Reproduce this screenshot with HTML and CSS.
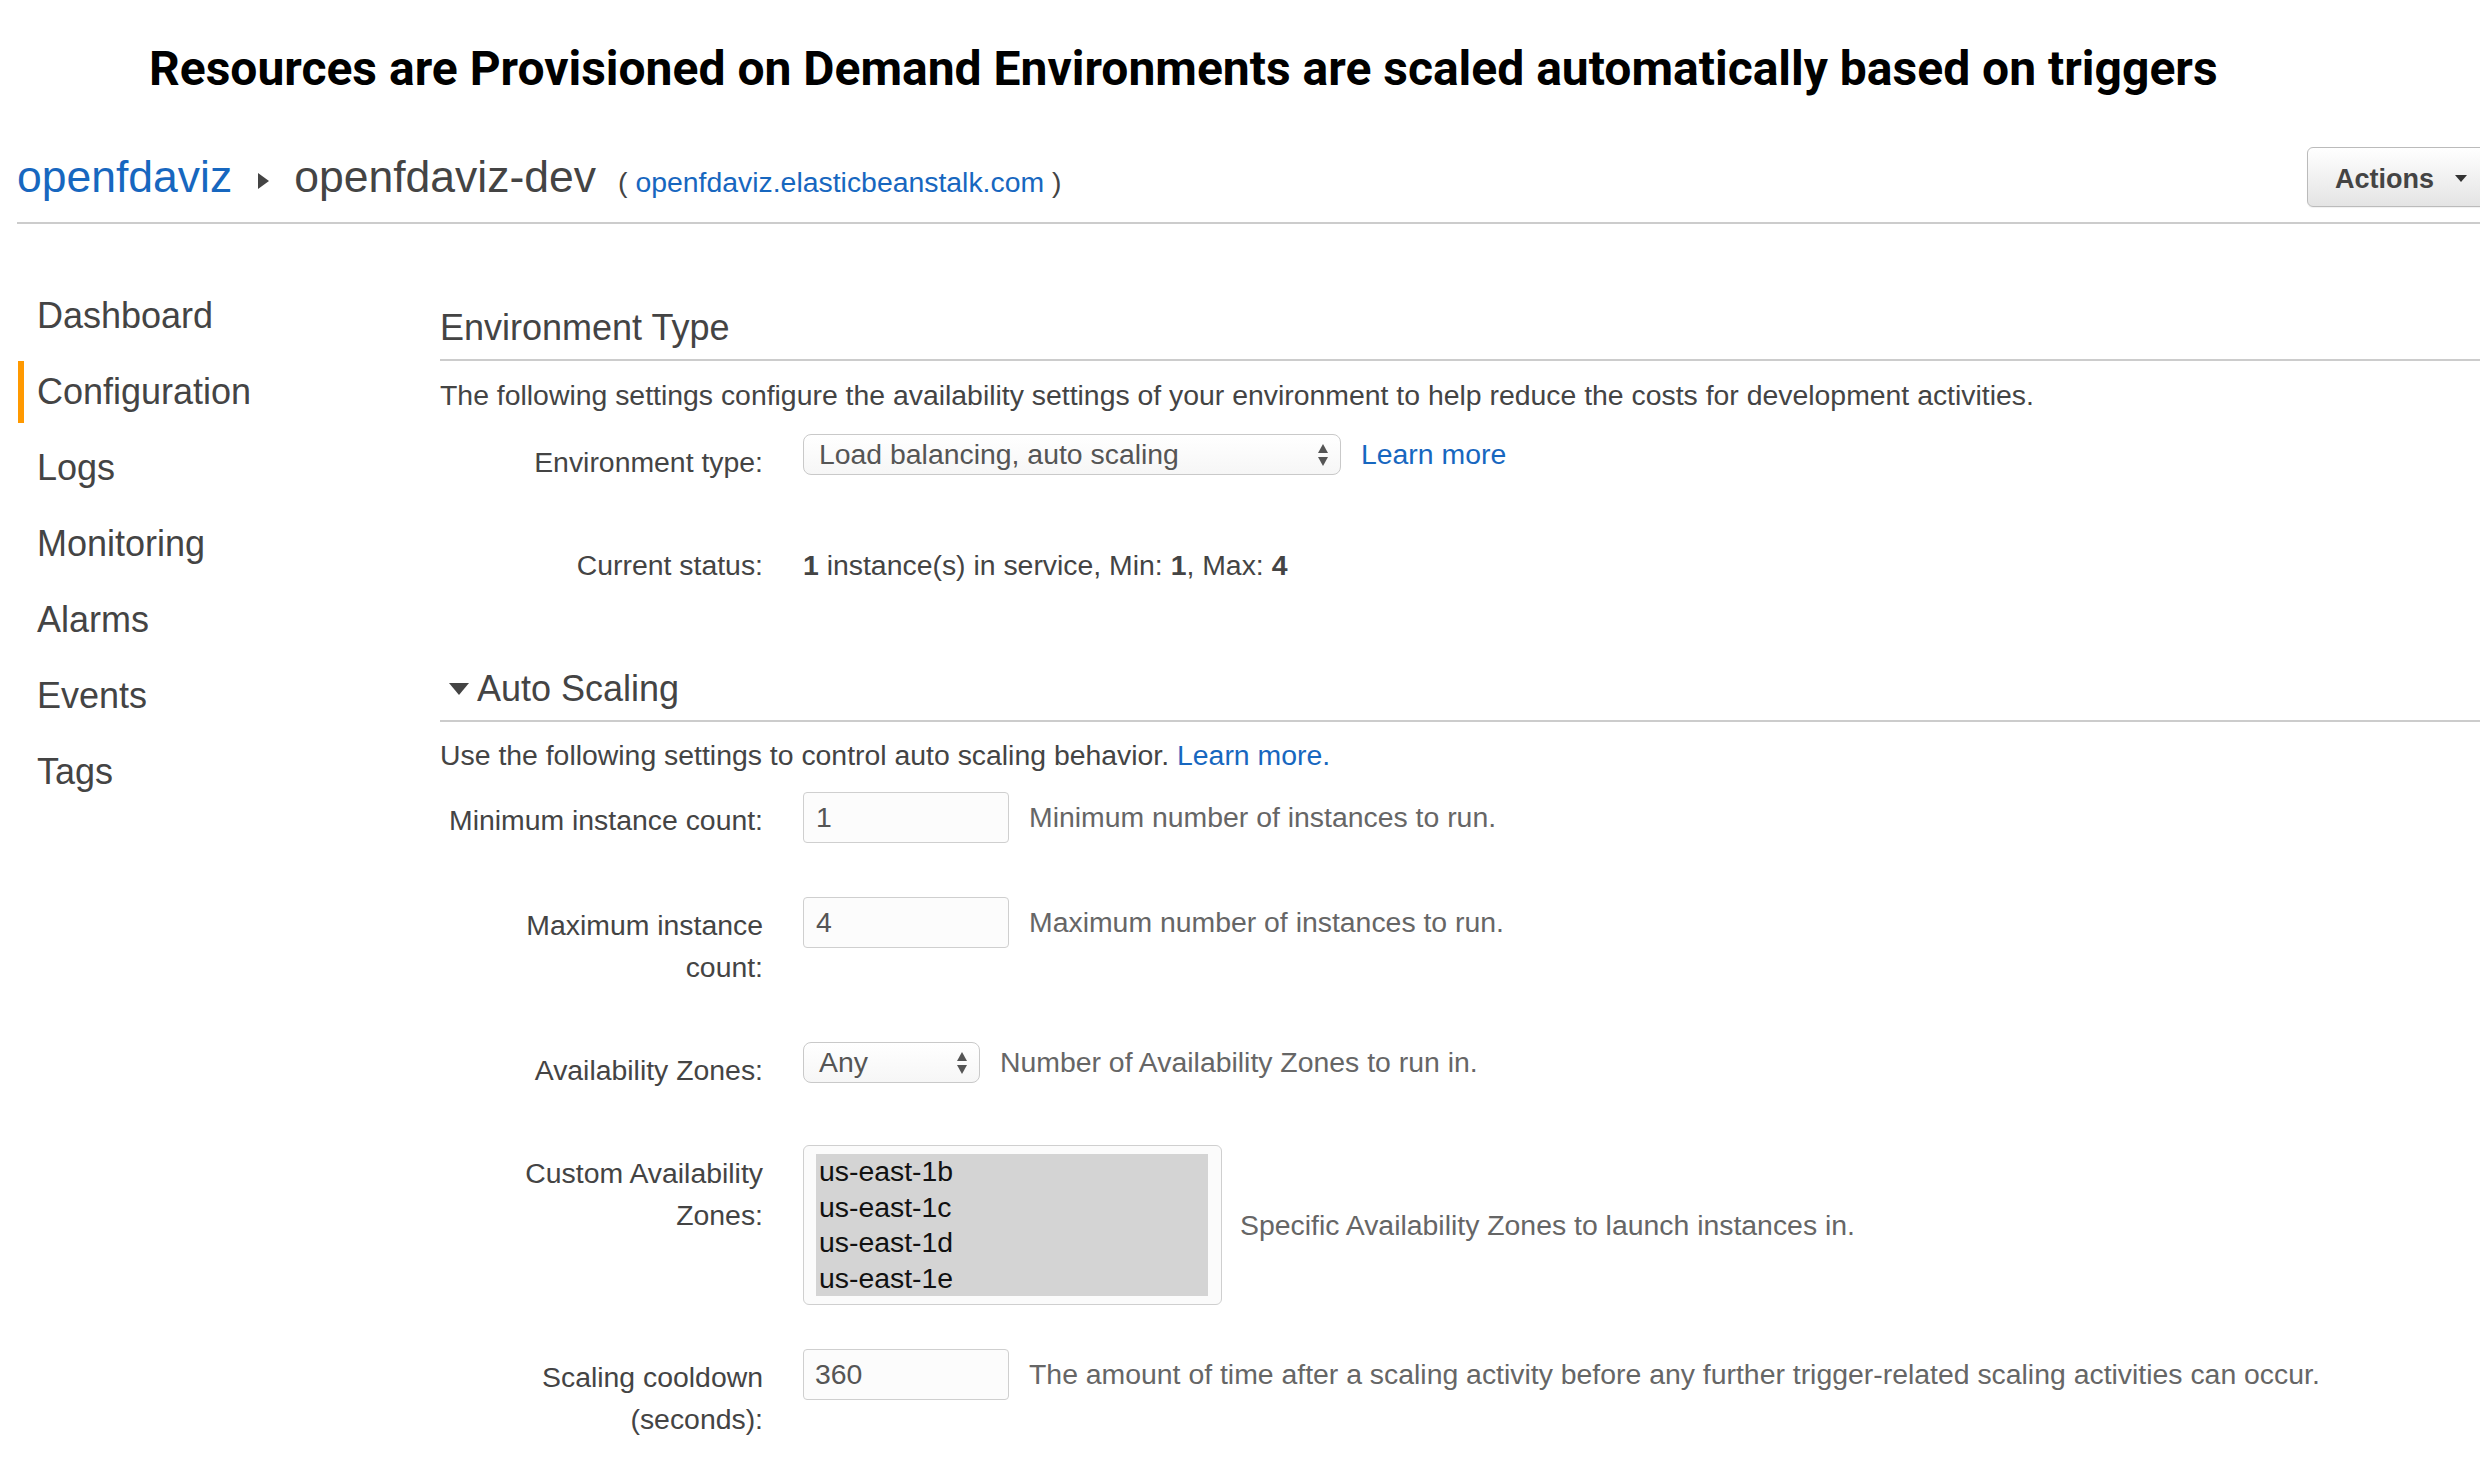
FILE: index.html
```html
<!DOCTYPE html>
<html lang="en">
<head>
<meta charset="utf-8">
<title>Elastic Beanstalk - Configuration</title>
<link rel="stylesheet" href="styles.css">
</head>
<body>
<h1 class="title">Resources are Provisioned on Demand Environments are scaled automatically based on triggers</h1>

<header class="crumbs">
  <div class="crumb-path">
    <a class="crumb-app" href="#">openfdaviz</a>
    <span class="crumb-sep"></span>
    <span class="crumb-env">openfdaviz-dev</span>
    <span class="crumb-url">( <a class="link" href="#">openfdaviz.elasticbeanstalk.com</a> )</span>
  </div>
  <button class="actions" type="button">Actions <span class="caret"></span></button>
</header>

<div class="layout">
  <nav class="sidenav">
    <a class="nav-item" href="#">Dashboard</a>
    <a class="nav-item active" href="#">Configuration</a>
    <a class="nav-item" href="#">Logs</a>
    <a class="nav-item" href="#">Monitoring</a>
    <a class="nav-item" href="#">Alarms</a>
    <a class="nav-item" href="#">Events</a>
    <a class="nav-item" href="#">Tags</a>
  </nav>

  <main class="content">
    <section class="panel">
      <h2 class="panel-title">Environment Type</h2>
      <p class="panel-desc">The following settings configure the availability settings of your environment to help reduce the costs for development activities.</p>
      <div class="form">
        <div class="form-row">
          <label class="lbl">Environment type:</label>
          <div class="ctrl">
            <div class="select select-wide"><span>Load balancing, auto scaling</span><span class="updown"><i class="up"></i><i class="down"></i></span></div>
            <a class="link" href="#">Learn more</a>
          </div>
        </div>
        <div class="form-row">
          <label class="lbl">Current status:</label>
          <div class="ctrl-text"><b>1</b> instance(s) in service, Min: <b>1</b>, Max: <b>4</b></div>
        </div>
      </div>
    </section>

    <section class="panel panel-next">
      <h2 class="panel-title"><span class="disclosure"></span>Auto Scaling</h2>
      <p class="panel-desc panel-desc-tight">Use the following settings to control auto scaling behavior. <a class="link" href="#">Learn more.</a></p>
      <div class="form form-tight">
        <div class="form-row">
          <label class="lbl">Minimum instance count:</label>
          <div class="ctrl">
            <div class="input">1</div>
            <span class="help">Minimum number of instances to run.</span>
          </div>
        </div>
        <div class="form-row">
          <label class="lbl">Maximum instance<br>count:</label>
          <div class="ctrl">
            <div class="input">4</div>
            <span class="help">Maximum number of instances to run.</span>
          </div>
        </div>
        <div class="form-row">
          <label class="lbl">Availability Zones:</label>
          <div class="ctrl">
            <div class="select select-narrow"><span>Any</span><span class="updown"><i class="up"></i><i class="down"></i></span></div>
            <span class="help">Number of Availability Zones to run in.</span>
          </div>
        </div>
        <div class="form-row">
          <label class="lbl">Custom Availability<br>Zones:</label>
          <div class="ctrl ctrl-list">
            <div class="listbox">
              <div class="options">
                <div class="option">us-east-1b</div>
                <div class="option">us-east-1c</div>
                <div class="option">us-east-1d</div>
                <div class="option">us-east-1e</div>
              </div>
            </div>
            <span class="help">Specific Availability Zones to launch instances in.</span>
          </div>
        </div>
        <div class="form-row form-row-after-list">
          <label class="lbl">Scaling cooldown<br>(seconds):</label>
          <div class="ctrl">
            <div class="input input-num">360</div>
            <span class="help">The amount of time after a scaling activity before any further trigger-related scaling activities can occur.</span>
          </div>
        </div>
      </div>
    </section>
  </main>
</div>
</body>
</html>
```

FILE: styles.css
```css
html, body {
  margin: 0;
  padding: 0;
  overflow: hidden;
}

body {
  width: 2480px;
  height: 1460px;
  background: #fff;
  font-family: "Liberation Sans", Arial, Helvetica, sans-serif;
  color: #444;
}

a { text-decoration: none; }

.link { color: #1767bf; }

/* Page headline */
.title {
  margin: 40px 0 0 149px;
  font-family: Roboto, "Liberation Sans", sans-serif;
  font-weight: 700;
  font-size: 48px;
  line-height: 58px;
  color: #000;
}

/* Breadcrumb bar */
.crumbs {
  display: flex;
  align-items: center;
  margin: 49px 0 0 17px;
  padding-bottom: 15px;
  border-bottom: 2px solid #ccc;
}

.crumb-path {
  display: flex;
  align-items: baseline;
}

.crumb-app {
  font-size: 44.5px;
  color: #1767bf;
}

.crumb-sep {
  align-self: center;
  width: 0;
  height: 0;
  margin: 8px 25px 0 26px;
  border-left: 11px solid #444;
  border-top: 8px solid transparent;
  border-bottom: 8px solid transparent;
}

.crumb-env {
  font-size: 44.5px;
  color: #444;
}

.crumb-url {
  margin-left: 22px;
  font-size: 28.4px;
  color: #444;
}

.actions {
  margin-left: auto;
  margin-right: -12px;
  box-sizing: border-box;
  width: 185px;
  height: 60px;
  padding: 3px 0 0 27px;
  display: flex;
  align-items: center;
  gap: 21px;
  border: 1px solid #bbb;
  border-radius: 6px;
  background: linear-gradient(#ffffff, #e4e4e4);
  box-shadow: 0 1px 1px rgba(0, 0, 0, 0.06);
  font-family: "Liberation Sans", Arial, sans-serif;
  font-weight: 700;
  font-size: 27px;
  line-height: 34px;
  color: #444;
}

.caret {
  width: 0;
  height: 0;
  border-top: 7px solid #333;
  border-left: 6.5px solid transparent;
  border-right: 6.5px solid transparent;
}

/* Main two-column layout */
.layout {
  display: grid;
  grid-template-columns: 440px 1fr;
}

.sidenav {
  display: flex;
  flex-direction: column;
  gap: 14px;
  padding-top: 61px;
}

.nav-item {
  height: 62px;
  line-height: 62px;
  margin-left: 18px;
  padding-left: 13px;
  border-left: 6px solid transparent;
  font-size: 36px;
  color: #444;
}

.nav-item.active {
  border-left-color: #f90;
}

.content {
  padding-top: 83px;
}

.panel-next {
  margin-top: 82px;
}

.panel-title {
  display: flex;
  align-items: center;
  margin: 0;
  padding-bottom: 10px;
  border-bottom: 2px solid #ccc;
  font-size: 36px;
  line-height: 42px;
  font-weight: normal;
  color: #444;
}

.disclosure {
  width: 0;
  height: 0;
  margin: 0 8px 0 9px;
  border-top: 12px solid #444;
  border-left: 10px solid transparent;
  border-right: 10px solid transparent;
}

.panel-desc {
  margin: 17px 0 0;
  font-size: 28.4px;
  line-height: 34px;
  color: #444;
}

.panel-desc-tight {
  margin-top: 16px;
}

/* Forms */
.form {
  margin-top: 22px;
  font-size: 28.4px;
}

.form-tight {
  margin-top: 20px;
}

.form-row {
  display: grid;
  grid-template-columns: 323px auto;
  column-gap: 40px;
  align-items: start;
}

.form-row + .form-row {
  margin-top: 54px;
}

.form-row.form-row-after-list {
  margin-top: 44px;
}

.lbl {
  padding-top: 7px;
  line-height: 42px;
  text-align: right;
  color: #444;
}

.ctrl {
  display: flex;
  align-items: center;
  gap: 20px;
}

.ctrl-list {
  gap: 18px;
}

.ctrl-text {
  padding-top: 7px;
  line-height: 42px;
  color: #444;
}

.ctrl-text b {
  font-weight: 700;
}

.help {
  color: #666;
  white-space: nowrap;
}

.select {
  box-sizing: border-box;
  height: 41px;
  display: flex;
  align-items: center;
  justify-content: space-between;
  padding: 0 12px 0 15px;
  border: 1px solid #c9c9c9;
  border-radius: 8px;
  background: linear-gradient(#ffffff, #f6f6f6);
  color: #555;
}

.select-wide { width: 538px; }
.select-narrow { width: 177px; }

.updown {
  display: flex;
  flex-direction: column;
  gap: 4px;
}

.updown .up {
  width: 0;
  height: 0;
  border-bottom: 9px solid #555;
  border-left: 5.5px solid transparent;
  border-right: 5.5px solid transparent;
}

.updown .down {
  width: 0;
  height: 0;
  border-top: 9px solid #555;
  border-left: 5.5px solid transparent;
  border-right: 5.5px solid transparent;
}

.input {
  box-sizing: border-box;
  width: 206px;
  height: 51px;
  display: flex;
  align-items: center;
  padding-left: 12px;
  border: 1px solid #cfcfcf;
  border-radius: 4px;
  background: #fcfcfc;
  color: #555;
}

.input-num {
  padding-left: 11px;
}

.listbox {
  box-sizing: border-box;
  width: 419px;
  height: 160px;
  padding: 8px 13px 8px 12px;
  border: 1px solid #cfcfcf;
  border-radius: 6px;
  background: #fbfbfb;
}

.options {
  height: 142px;
  background: #d4d4d4;
}

.option {
  padding-left: 3px;
  line-height: 35.5px;
  color: #111;
}
```
